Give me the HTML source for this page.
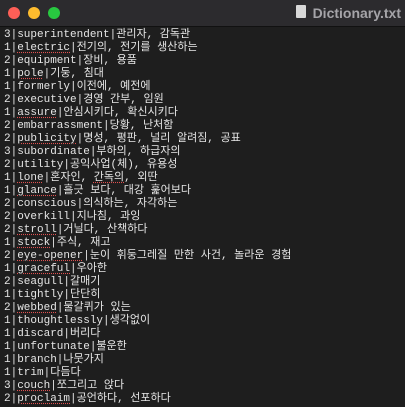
<!DOCTYPE html>
<html><head><meta charset="utf-8"><style>
html,body{margin:0;padding:0;width:405px;height:407px;overflow:hidden;background:#1e1e1e;}
.bar{position:absolute;left:0;top:0;width:405px;height:26px;background:#2c2b2e;border-bottom:1px solid #111;}
.dot{position:absolute;top:7px;width:12px;height:12px;border-radius:50%;}
.title{position:absolute;right:4px;top:5px;font:bold 14px "Liberation Sans",sans-serif;color:#a5a4a8;}
.doc{position:absolute;left:296px;top:5px;width:10px;height:13px;background:#d8d8d8;border-radius:1px;}
.txt{position:absolute;left:4px;top:29px;font:11px/13px "Liberation Mono","Noto Sans CJK KR",monospace;color:#e6e6e6;white-space:pre;}
u{text-decoration:underline dotted #e05050;text-underline-offset:2px;}
</style></head><body>
<div class="bar">
<div class="dot" style="left:8px;background:#fe5f57"></div>
<div class="dot" style="left:28px;background:#febc2e"></div>
<div class="dot" style="left:48px;background:#28c840"></div>
<div class="doc"></div>
<div class="title">Dictionary.txt</div>
</div>
<div class="txt">3|superintendent|관리자, 감독관
1|<u>electric</u>|전기의, 전기를 생산하는
2|equipment|장비, 용품
1|<u>pole</u>|기둥, 침대
1|formerly|이전에, 예전에
2|executive|경영 간부, 임원
1|<u>assure</u>|안심시키다, 확신시키다
2|embarrassment|당황, 난처함
2|<u>publicity</u>|명성, 평판, 널리 알려짐, 공표
3|subordinate|부하의, 하급자의
2|utility|공익사업(체), 유용성
1|<u>lone</u>|혼자인, <u>간독의</u>, 외딴
1|<u>glance</u>|흘긋 보다, 대강 훑어보다
2|conscious|의식하는, 자각하는
2|overkill|지나침, 과잉
2|<u>stroll</u>|거닐다, 산책하다
1|<u>stock</u>|주식, 재고
2|<u>eye-opener</u>|눈이 휘둥그레질 만한 사건, 놀라운 경험
1|<u>graceful</u>|우아한
2|seagull|갈매기
1|tightly|단단히
2|<u>webbed</u>|물갈퀴가 있는
1|thoughtlessly|생각없이
1|discard|버리다
1|unfortunate|불운한
1|branch|나뭇가지
1|trim|다듬다
3|<u>couch</u>|쪼그리고 앉다
2|<u>proclaim</u>|공언하다, 선포하다</div>
</body></html>
